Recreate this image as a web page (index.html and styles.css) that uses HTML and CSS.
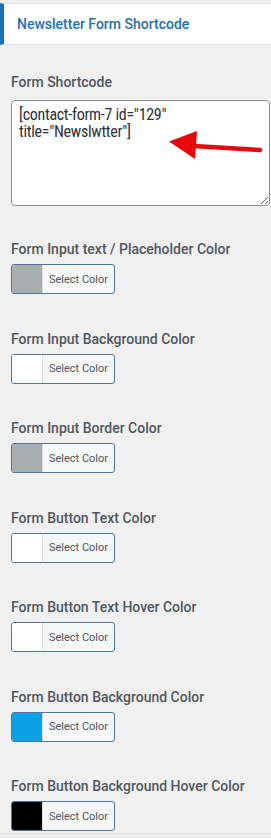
FILE: index.html
```html
<!DOCTYPE html>
<html lang="en">
<head>
    <meta charset="UTF-8">
    <meta name="viewport" content="width=device-width, initial-scale=1.0">
    <title>Newsletter Form Shortcode</title>
    <link rel="stylesheet" href="styles.css">
</head>
<body>

<div class="section-head">
    <h3>Newsletter Form Shortcode</h3>
</div>

<div class="controls">
    <div class="control control-text">
        <label class="control-title" for="shortcode">Form Shortcode</label>
        <div class="textarea-wrap">
            <textarea id="shortcode" class="shortcode">[contact-form-7 id="129" title="Newslwtter"]</textarea>
            <svg class="arrow" width="100" height="34" viewBox="0 0 100 34">
                <line x1="27" y1="18" x2="93" y2="22" stroke="#e8080c" stroke-width="4.5" stroke-linecap="round"/>
                <polygon points="2,13.5 30,3 28,31" fill="#e8080c"/>
            </svg>
        </div>
    </div>

    <div class="control">
        <div class="control-title">Form Input text / Placeholder Color</div>
        <button class="color-btn"><span class="swatch" style="background:#a8adaf"></span><span class="btn-text">Select Color</span></button>
    </div>

    <div class="control">
        <div class="control-title">Form Input Background Color</div>
        <button class="color-btn"><span class="swatch" style="background:#ffffff"></span><span class="btn-text">Select Color</span></button>
    </div>

    <div class="control">
        <div class="control-title">Form Input Border Color</div>
        <button class="color-btn"><span class="swatch" style="background:#a8adaf"></span><span class="btn-text">Select Color</span></button>
    </div>

    <div class="control">
        <div class="control-title">Form Button Text Color</div>
        <button class="color-btn"><span class="swatch" style="background:#ffffff"></span><span class="btn-text">Select Color</span></button>
    </div>

    <div class="control">
        <div class="control-title">Form Button Text Hover Color</div>
        <button class="color-btn"><span class="swatch" style="background:#ffffff"></span><span class="btn-text">Select Color</span></button>
    </div>

    <div class="control">
        <div class="control-title">Form Button Background Color</div>
        <button class="color-btn"><span class="swatch" style="background:#0ea0e5"></span><span class="btn-text">Select Color</span></button>
    </div>

    <div class="control">
        <div class="control-title">Form Button Background Hover Color</div>
        <button class="color-btn"><span class="swatch" style="background:#000000"></span><span class="btn-text">Select Color</span></button>
    </div>
</div>

</body>
</html>
```

FILE: styles.css
```css
body {
    margin: 0;
    font-family: Roboto, "Liberation Sans", sans-serif;
    background-color: #f0f0f1;
    color: #50575e;
}
.section-head {
    margin-top: 3px;
    border-top: 1px solid #e2e2e4;
    border-bottom: 1px solid #e2e2e4;
    border-left: 4px solid #2271b1;
    background-color: #fff;
    height: 40px;
    display: flex;
    align-items: center;
    padding-left: 13px;
}
.section-head h3 {
    margin: 0;
    font-size: 14px;
    font-weight: 500;
    color: #2271b1;
}
.controls {
    padding: 27px 1px 0 11px;
    border-bottom: 1px solid #dcdcde;
}
.control {
    margin-bottom: 34.5px;
}
.control-text {
    margin-bottom: 33px;
}
.control-text .control-title {
    margin-bottom: 8px;
}
.control:last-child {
    margin-bottom: 2px;
}
.control-title {
    display: block;
    font-size: 14px;
    font-weight: 500;
    line-height: 20px;
    margin-bottom: 5px;
    color: #50575e;
}
.textarea-wrap {
    position: relative;
}
.shortcode {
    display: block;
    box-sizing: border-box;
    width: 100%;
    height: 106px;
    margin: 0;
    padding: 5px 7px;
    border: 1px solid #8c8f94;
    border-radius: 4px;
    font-family: "Roboto Condensed", Roboto, "Liberation Sans Narrow", sans-serif;
    font-stretch: 75%;
    font-size: 16px;
    letter-spacing: -0.3px;
    line-height: 17px;
    color: #2c3338;
    background-color: #fff;
    resize: vertical;
}
.arrow {
    position: absolute;
    left: 156px;
    top: 28px;
}
.color-btn {
    display: flex;
    align-items: stretch;
    box-sizing: border-box;
    width: 104px;
    height: 30px;
    padding: 0;
    border: 1px solid #4f7597;
    border-radius: 3px;
    background-color: #f6f7f7;
    overflow: hidden;
    cursor: pointer;
    font-family: Roboto, "Liberation Sans", sans-serif;
}
.swatch {
    width: 30px;
    border-right: 1px solid #dcdcde;
}
.btn-text {
    flex: 1;
    display: flex;
    align-items: center;
    justify-content: center;
    font-size: 11px;
    color: #50575e;
}
```
